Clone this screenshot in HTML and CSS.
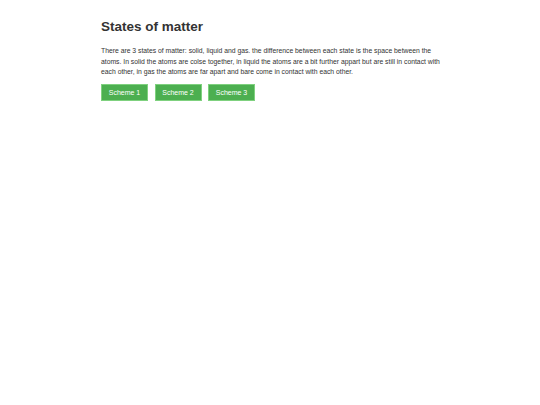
FILE: index.html
```
<!DOCTYPE html>
<html>
<head>
<meta charset="utf-8">
<link rel="stylesheet" href="styles.css">
</head>
<body>
<div class="container">
  <h1 class="title">States of matter</h1>
  <p class="text">There are 3 states of matter: solid, liquid and gas. the difference between each state is the space between the atoms. In solid the atoms are colse together, in liquid the atoms are a bit further appart but are still in contact with each other, in gas the atoms are far apart and bare come in contact with each other.</p>
  <div class="buttons">
    <button class="btn">Scheme 1</button>
    <button class="btn">Scheme 2</button>
    <button class="btn">Scheme 3</button>
  </div>
</div>
</body>
</html>
```
FILE: styles.css
```
html, body {
  margin: 0;
  padding: 0;
  background: #fff;
}
body {
  font-family: "Liberation Sans", Arial, sans-serif;
  color: #333;
}
.container {
  width: 340px;
  margin-left: calc(50% - 169px);
  padding-top: 18px;
}
.title {
  font-size: 13.5px;
  font-weight: bold;
  margin: 0 0 10px 0;
  line-height: 18px;
}
.text {
  font-size: 6.8px;
  line-height: 10.5px;
  margin: 0 0 6px 0;
}
.buttons {
  display: flex;
  gap: 6.5px;
}
.btn {
  background: #4caf50;
  color: #fff;
  border: 1px solid #7fd17f;
  font-family: "Liberation Sans", Arial, sans-serif;
  font-size: 7px;
  width: 47px;
  height: 17px;
  padding: 0;
}
```
